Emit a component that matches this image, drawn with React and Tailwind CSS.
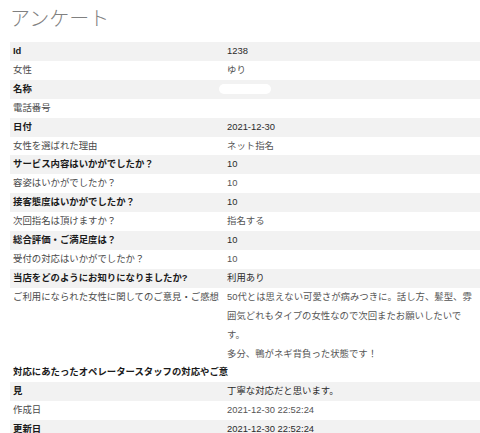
import React from "react";

const rows = [
  ["Id", "1238"],
  ["女性", "ゆり"],
  ["名称", "__pill"],
  ["電話番号", ""],
  ["日付", "2021-12-30"],
  ["女性を選ばれた理由", "ネット指名"],
  ["サービス内容はいかがでしたか？", "10"],
  ["容姿はいかがでしたか？", "10"],
  ["接客態度はいかがでしたか？", "10"],
  ["次回指名は頂けますか？", "指名する"],
  ["総合評価・ご満足度は？", "10"],
  ["受付の対応はいかがでしたか？", "10"],
  ["当店をどのようにお知りになりましたか?", "利用あり"],
];

function Row({ label, value, shaded, children }) {
  return (
    <div
      className={
        shaded
          ? "grid grid-cols-[214px_1fr] leading-[18.9px] bg-[#f2f2f2]"
          : "grid grid-cols-[214px_1fr] leading-[18.9px]"
      }
    >
      <div
        className={
          shaded
            ? "pl-[3px] font-bold text-[#1a1a1a]"
            : "pl-[3px] text-[#4a4a4a]"
        }
      >
        {label}
      </div>
      <div className={shaded ? "pl-[3px] text-[#2a2a2a]" : "pl-[3px] text-[#555]"}>
        {children ?? value}
      </div>
    </div>
  );
}

export default function App() {
  return (
    <div className="w-[480px] h-[433px] overflow-hidden bg-white font-['Liberation_Sans','Noto_Sans_CJK_JP',sans-serif] text-[9.4px]">
      <h1 className="h-[42px] pl-[10px] pt-[6px] text-[20px] leading-[24px] font-light text-[#808080] font-['Noto_Sans_CJK_JP',sans-serif]">
        アンケート
      </h1>
      <div className="ml-[10px]">
        {rows.map(([l, v], i) => (
          <Row key={i} label={l} value={v} shaded={i % 2 === 0}>
            {v === "__pill" ? (
              <div className="flex h-[18.9px] items-center">
                <div className="-ml-[8px] h-[10px] w-[52px] rounded-full bg-white blur-[0.5px]" />
              </div>
            ) : undefined}
          </Row>
        ))}
        <Row label="ご利用になられた女性に関してのご意見・ご感想" shaded={false}>
          <div className="whitespace-nowrap">
            <div>50代とは思えない可愛さが病みつきに。話し方、髪型、雰</div>
            <div>囲気どれもタイプの女性なので次回またお願いしたいで</div>
            <div>す。</div>
            <div>多分、鴨がネギ背負った状態です！</div>
          </div>
        </Row>
        <div className="leading-[18.9px] pl-[3px] font-bold text-[#1a1a1a] whitespace-nowrap">
          対応にあたったオペレータースタッフの対応やご意
        </div>
        <Row label="見" value="丁寧な対応だと思います。" shaded={true} />
        <Row label="作成日" value="2021-12-30 22:52:24" shaded={false} />
        <Row label="更新日" value="2021-12-30 22:52:24" shaded={true} />
      </div>
    </div>
  );
}
